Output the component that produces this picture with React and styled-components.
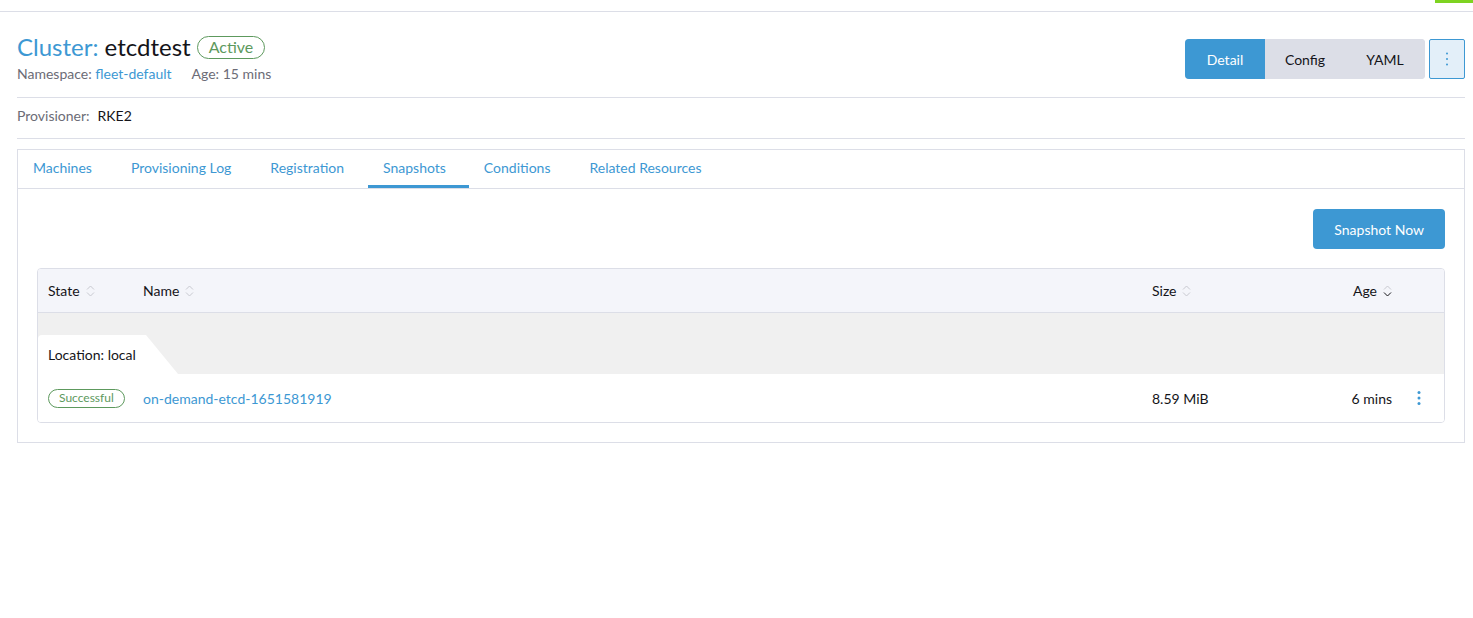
import React from "react";
import styled, { createGlobalStyle } from "styled-components";

const Global = createGlobalStyle`
  html, body { margin: 0; padding: 0; background: #fff; }
  body { font-family: Lato, "Noto Sans", sans-serif; color: #141419; font-size: 14px; }
  * { box-sizing: border-box; }
`;

const TopBar = styled.div`
  height: 12px;
  border-bottom: 1px solid #dcdee7;
  position: relative;
`;

const GreenMark = styled.div`
  position: absolute;
  right: 0;
  top: 0;
  width: 38px;
  height: 3px;
  background: #7ed321;
`;

const Page = styled.div`
  padding: 0 8px 0 17px;
`;

const Header = styled.div`
  display: flex;
  justify-content: space-between;
  align-items: flex-start;
  padding-top: 21px;
  padding-bottom: 13px;
  border-bottom: 1px solid #dcdee7;
`;

const TitleBlock = styled.div`
  display: flex;
  flex-direction: column;
`;

const TitleRow = styled.div`
  display: flex;
  align-items: center;
  gap: 6px;
  height: 28px;
`;

const Title = styled.h1`
  margin: 0;
  font-size: 24px;
  font-weight: 400;
  line-height: 28px;
  color: #141419;
`;

const Blue = styled.span`
  color: #3d98d3;
`;

const Badge = styled.span`
  display: inline-flex;
  align-items: center;
  border: 1px solid ${(p) => p.$color || "#5d995d"};
  color: ${(p) => p.$color || "#5d995d"};
  border-radius: ${(p) => (p.$small ? "10px" : "12px")};
  font-size: ${(p) => (p.$small ? "12px" : "16px")};
  height: ${(p) => (p.$small ? "19px" : "23px")};
  padding: ${(p) => (p.$small ? "0 10px" : "0 11px")};
  line-height: 1;
`;

const SubRow = styled.div`
  display: flex;
  gap: 20px;
  margin-top: 3px;
  color: #6c6c76;
  font-size: 14px;
  line-height: 20px;
`;

const Link = styled.a`
  color: #3d98d3;
  text-decoration: none;
`;

const Actions = styled.div`
  display: flex;
  gap: 4px;
  margin-top: 6px;
`;

const ButtonGroup = styled.div`
  display: flex;
  border-radius: 4px;
  overflow: hidden;
  background: #dcdee7;
`;

const GroupButton = styled.button`
  height: 40px;
  width: 80px;
  border: 0;
  font-family: inherit;
  font-size: 14px;
  background: ${(p) => (p.$active ? "#3d98d3" : "#dcdee7")};
  color: ${(p) => (p.$active ? "#fff" : "#141419")};
  cursor: pointer;
`;

const KebabButton = styled.button`
  width: 36px;
  height: 40px;
  border: 1px solid #3d98d3;
  background: #e3eff9;
  border-radius: 2px;
  display: flex;
  align-items: center;
  justify-content: center;
  padding: 0;
`;

const InfoRow = styled.div`
  padding: 8px 0 12px;
  line-height: 20px;
  border-bottom: 1px solid #dcdee7;
  color: #6c6c76;
  display: flex;
  gap: 8px;
`;

const Dark = styled.span`
  color: #141419;
`;

const TabBox = styled.div`
  margin-top: 10px;
  border: 1px solid #dcdee7;
`;

const TabList = styled.div`
  display: flex;
  height: 39px;
  border-bottom: 1px solid #dcdee7;
`;

const Tab = styled.div`
  padding: ${(p) => (p.$active ? "0 23px 0 15px" : "0 15px")};
  margin-right: ${(p) => (p.$active ? "0" : "9px")};
  display: flex;
  align-items: center;
  color: #3d98d3;
  font-size: 14px;
  border-bottom: 3px solid ${(p) => (p.$active ? "#3d98d3" : "transparent")};
  height: 38px;
`;

const TabBody = styled.div`
  padding: 20px 19px 19px;
`;

const Toolbar = styled.div`
  display: flex;
  justify-content: flex-end;
  margin-bottom: 19px;
`;

const PrimaryButton = styled.button`
  height: 40px;
  padding: 0 21px;
  border: 0;
  border-radius: 4px;
  background: #3d98d3;
  color: #fff;
  font-family: inherit;
  font-size: 14px;
`;

const Table = styled.div`
  border: 1px solid #dcdee7;
  border-radius: 4px;
  overflow: hidden;
`;

const Row = styled.div`
  display: grid;
  grid-template-columns: 95px 1fr 150px 110px 42px;
  align-items: center;
  height: ${(p) => p.$h || 48}px;
  background: ${(p) => p.$bg || "#fff"};
  border-bottom: ${(p) => (p.$border ? "1px solid #dcdee7" : "0")};
`;

const Cell = styled.div`
  padding: 0 10px;
  display: flex;
  align-items: center;
  justify-content: ${(p) => (p.$right ? "flex-end" : "flex-start")};
  gap: 6px;
`;

const ActionCell = styled.div`
  padding-left: 15px;
  display: flex;
  align-items: center;
`;

const GroupRow = styled.div`
  height: 61px;
  background: #f0f0f0;
  display: flex;
  align-items: flex-end;
`;

const GroupTab = styled.div`
  position: relative;
  height: 39px;
  padding: 0 10px;
  display: flex;
  align-items: center;
  width: 108px;
  background: #fff;
  border-top-left-radius: 4px;
  white-space: nowrap;
  &::after {
    content: "";
    position: absolute;
    right: -32px;
    top: 0;
    width: 0;
    height: 0;
    border-left: 32px solid #fff;
    border-bottom: 39px solid transparent;
    transform: scaleY(-1);
  }
`;

const DotsIcon = ({ color = "#3d98d3", size = 3 }) => (
  <svg width="4" height="16" viewBox="0 0 4 16">
    <circle cx="2" cy="2.5" r={size / 2} fill={color} />
    <circle cx="2" cy="8" r={size / 2} fill={color} />
    <circle cx="2" cy="13.5" r={size / 2} fill={color} />
  </svg>
);

const SortIcon = ({ desc }) => (
  <svg width="9" height="12" viewBox="0 0 9 12">
    <path d="M1 4.5 L4.5 1 L8 4.5" fill="none" stroke="#c8c9d0" strokeWidth="1" />
    <path d="M1 7.5 L4.5 11 L8 7.5" fill="none" stroke={desc ? "#141419" : "#c8c9d0"} strokeWidth="1" />
  </svg>
);

export default function App() {
  const tabs = ["Machines", "Provisioning Log", "Registration", "Snapshots", "Conditions", "Related Resources"];
  return (
    <>
      <Global />
      <TopBar>
        <GreenMark />
      </TopBar>
      <Page>
        <Header>
          <TitleBlock>
            <TitleRow>
              <Title>
                <Blue>Cluster:</Blue> etcdtest
              </Title>
              <Badge>Active</Badge>
            </TitleRow>
            <SubRow>
              <span>
                Namespace: <Link href="#">fleet-default</Link>
              </span>
              <span>Age: 15 mins</span>
            </SubRow>
          </TitleBlock>
          <Actions>
            <ButtonGroup>
              <GroupButton $active>Detail</GroupButton>
              <GroupButton>Config</GroupButton>
              <GroupButton>YAML</GroupButton>
            </ButtonGroup>
            <KebabButton>
              <DotsIcon size={2} />
            </KebabButton>
          </Actions>
        </Header>
        <InfoRow>
          <span>Provisioner:</span>
          <Dark>RKE2</Dark>
        </InfoRow>
        <TabBox>
          <TabList>
            {tabs.map((t) => (
              <Tab key={t} $active={t === "Snapshots"}>
                {t}
              </Tab>
            ))}
          </TabList>
          <TabBody>
            <Toolbar>
              <PrimaryButton>Snapshot Now</PrimaryButton>
            </Toolbar>
            <Table>
              <Row $h={44} $bg="#f4f5fa" $border>
                <Cell>
                  State <SortIcon />
                </Cell>
                <Cell>
                  Name <SortIcon />
                </Cell>
                <Cell>
                  Size <SortIcon />
                </Cell>
                <Cell $right>
                  Age <SortIcon desc />
                </Cell>
                <Cell />
              </Row>
              <GroupRow>
                <GroupTab>Location: local</GroupTab>
              </GroupRow>
              <Row $h={48}>
                <Cell>
                  <Badge $small>Successful</Badge>
                </Cell>
                <Cell>
                  <Link href="#">on-demand-etcd-1651581919</Link>
                </Cell>
                <Cell>8.59 MiB</Cell>
                <Cell $right>6 mins</Cell>
                <ActionCell>
                  <DotsIcon color="#3d98d3" size={3} />
                </ActionCell>
              </Row>
            </Table>
          </TabBody>
        </TabBox>
      </Page>
    </>
  );
}
